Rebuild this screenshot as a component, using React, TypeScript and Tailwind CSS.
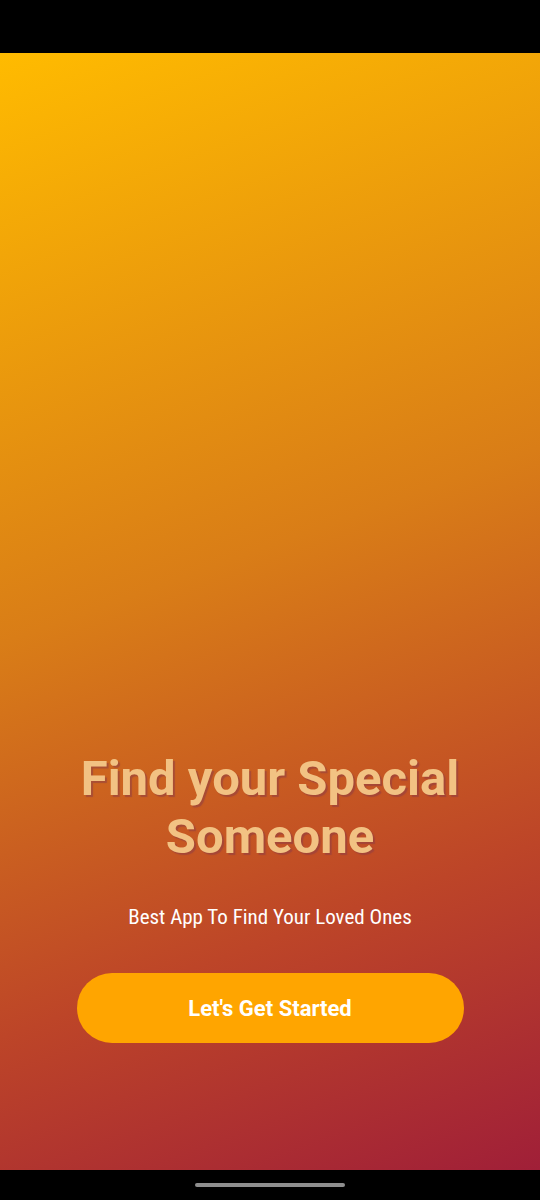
export default function App() {
  return (
    <div className="flex h-[1200px] w-[540px] flex-col bg-black font-['Roboto',sans-serif]">
      <div className="h-[53px] shrink-0 bg-black" />
      <main className="flex flex-1 flex-col items-center justify-end bg-[linear-gradient(160deg,#ffbb00_0%,#d97d17_45%,#bd4528_75%,#a01f38_100%)] px-[70px] pb-[127px]">
        <h1 className="text-center text-[49px] font-bold leading-[58px] text-[#f2c283] [text-shadow:2px_2px_1px_rgba(140,60,70,0.55)]">
          Find your Special Someone
        </h1>
        <p className="mt-[36px] text-center font-['Liberation_Sans_Narrow','Roboto_Condensed',sans-serif] text-[21px] text-white">
          Best App To Find Your Loved Ones
        </p>
        <button className="mt-[40px] h-[70px] w-[387px] rounded-full bg-[#ffa500] text-[22px] font-bold text-white">
          Let's Get Started
        </button>
      </main>
      <div className="flex h-[30px] shrink-0 items-center justify-center bg-black">
        <div className="h-[4px] w-[150px] rounded-full bg-[#8e8e8e]" />
      </div>
    </div>
  );
}
